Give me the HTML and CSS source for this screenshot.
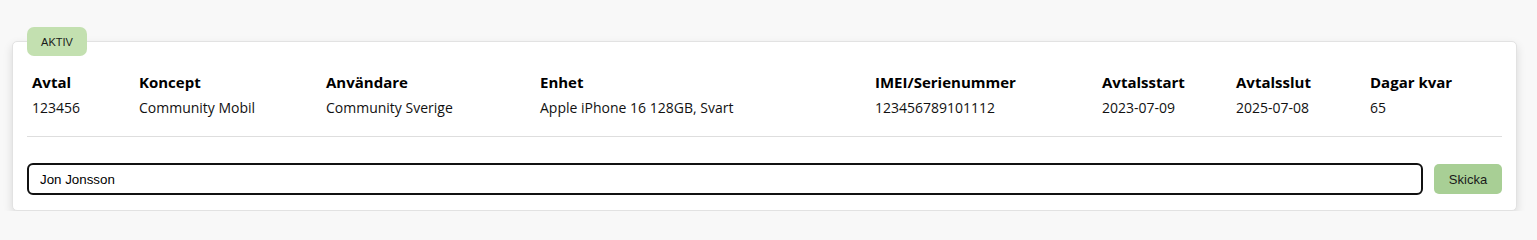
FILE: index.html
```html
<!DOCTYPE html>
<html lang="sv">
<head>
<meta charset="utf-8">
<title>Avtal</title>
<link rel="stylesheet" href="styles.css">
</head>
<body>
<div class="page">
  <section class="card">
    <span class="badge">AKTIV</span>
    <div class="grid">
      <div class="th">Avtal</div>
      <div class="th">Koncept</div>
      <div class="th">Användare</div>
      <div class="th">Enhet</div>
      <div class="th">IMEI/Serienummer</div>
      <div class="th">Avtalsstart</div>
      <div class="th">Avtalsslut</div>
      <div class="th">Dagar kvar</div>
      <div class="td">123456</div>
      <div class="td">Community Mobil</div>
      <div class="td">Community Sverige</div>
      <div class="td">Apple iPhone 16 128GB, Svart</div>
      <div class="td">123456789101112</div>
      <div class="td">2023-07-09</div>
      <div class="td">2025-07-08</div>
      <div class="td">65</div>
    </div>
    <hr class="sep">
    <form class="row" onsubmit="return false">
      <input class="field" type="text" value="Jon Jonsson" autofocus>
      <button class="btn" type="submit">Skicka</button>
    </form>
  </section>
</div>
</body>
</html>
```

FILE: styles.css
```css
html, body {
  margin: 0;
  padding: 0;
  background: #f8f8f8;
  overflow: hidden;
}

.page {
  padding: 41px 20px 0 12px;
}

.card {
  position: relative;
  background: #ffffff;
  border: 1px solid #e2e2e2;
  border-radius: 5px;
  box-shadow: 0 4px 10px rgba(0, 0, 0, 0.13);
  padding: 30px 14px 15px 14px;
}

.badge {
  position: absolute;
  top: -15px;
  left: 14px;
  width: 60px;
  height: 29px;
  box-sizing: border-box;
  display: flex;
  align-items: center;
  justify-content: center;
  background: #c3e0b0;
  border-radius: 7px;
  font-family: "Liberation Sans", Arial, sans-serif;
  font-size: 11px;
  color: #1a1a1a;
}

.grid {
  display: grid;
  grid-template-columns: 107px 187px 214px 335px 227px 134px 134px 1fr;
  row-gap: 6px;
  padding: 0 5px;
  font-family: "Open Sans", sans-serif;
  color: #000;
}

.th {
  font-size: 15px;
  font-weight: 700;
  line-height: 20px;
}

.td {
  font-size: 14px;
  line-height: 20px;
  color: #111;
}

.sep {
  border: 0;
  border-top: 1px solid #dedede;
  margin: 18px 0 26px 0;
  height: 0;
}

.row {
  display: flex;
  align-items: center;
  gap: 11px;
  margin: 0;
}

.field {
  flex: 1;
  height: 32px;
  box-sizing: border-box;
  border: 2px solid #111;
  border-radius: 6px;
  padding: 0 11px;
  font-family: "Liberation Sans", Arial, sans-serif;
  font-size: 13.33px;
  color: #000;
  background: #fff;
  outline: none;
  margin: 0;
}

.btn {
  width: 68px;
  height: 30px;
  border: 0;
  border-radius: 5px;
  background: #a8cf95;
  color: #1a1a1a;
  font-family: "Liberation Sans", Arial, sans-serif;
  font-size: 13px;
  padding: 0;
  margin: 0;
  cursor: pointer;
}
```
